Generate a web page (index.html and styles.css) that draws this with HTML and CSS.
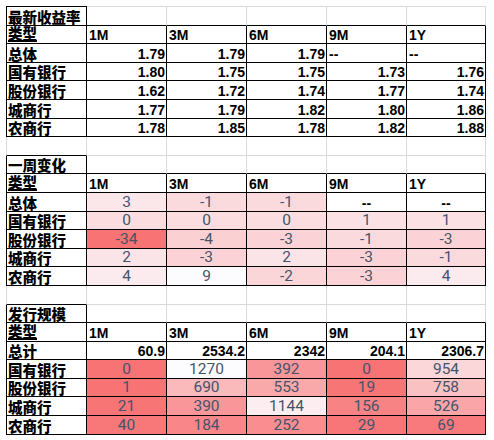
FILE: index.html
```html
<!DOCTYPE html>
<html lang="zh">
<head>
<meta charset="utf-8">
<title>收益率</title>
<link rel="stylesheet" href="styles.css">
</head>
<body>
<div class="sheet">
  <!-- 最新收益率 -->
  <div class="cell fc top title zh">最新收益率</div>
  <div class="cell cap top"></div><div class="cell cap top"></div><div class="cell cap top"></div><div class="cell cap top"></div><div class="cell cap top"></div>
  <div class="cell fc zh"><span class="ul">类型</span></div>
  <div class="cell hd">1M</div><div class="cell hd">3M</div><div class="cell hd">6M</div><div class="cell hd">9M</div><div class="cell hd">1Y</div>
  <div class="cell fc zh">总体</div>
  <div class="cell num">1.79</div><div class="cell num">1.79</div><div class="cell num">1.79</div><div class="cell dash">--</div><div class="cell dash">--</div>
  <div class="cell fc zh">国有银行</div>
  <div class="cell num">1.80</div><div class="cell num">1.75</div><div class="cell num">1.75</div><div class="cell num">1.73</div><div class="cell num">1.76</div>
  <div class="cell fc zh">股份银行</div>
  <div class="cell num">1.62</div><div class="cell num">1.72</div><div class="cell num">1.74</div><div class="cell num">1.77</div><div class="cell num">1.74</div>
  <div class="cell fc zh">城商行</div>
  <div class="cell num">1.77</div><div class="cell num">1.79</div><div class="cell num">1.82</div><div class="cell num">1.80</div><div class="cell num">1.86</div>
  <div class="cell fc zh">农商行</div>
  <div class="cell num">1.78</div><div class="cell num">1.85</div><div class="cell num">1.78</div><div class="cell num">1.82</div><div class="cell num">1.88</div>

  <div class="cell fc gap gap0"></div><div class="cell gap"></div><div class="cell gap"></div><div class="cell gap"></div><div class="cell gap"></div><div class="cell gap"></div>

  <!-- 一周变化 -->
  <div class="cell fc title zh">一周变化</div>
  <div class="cell cap"></div><div class="cell cap"></div><div class="cell cap"></div><div class="cell cap"></div><div class="cell cap"></div>
  <div class="cell fc zh"><span class="ul">类型</span></div>
  <div class="cell hd">1M</div><div class="cell hd">3M</div><div class="cell hd">6M</div><div class="cell hd">9M</div><div class="cell hd">1Y</div>
  <div class="cell fc zh">总体</div>
  <div class="cell val" style="background:rgb(251,231,234)">3</div><div class="cell val" style="background:rgb(251,218,221)">-1</div><div class="cell val" style="background:rgb(251,218,221)">-1</div><div class="cell dc">--</div><div class="cell dc">--</div>
  <div class="cell fc zh">国有银行</div>
  <div class="cell val" style="background:rgb(251,221,224)">0</div><div class="cell val" style="background:rgb(251,221,224)">0</div><div class="cell val" style="background:rgb(251,221,224)">0</div><div class="cell val" style="background:rgb(251,225,228)">1</div><div class="cell val" style="background:rgb(251,225,228)">1</div>
  <div class="cell fc zh">股份银行</div>
  <div class="cell val" style="background:rgb(248,115,116)">-34</div><div class="cell val" style="background:rgb(251,208,210)">-4</div><div class="cell val" style="background:rgb(251,211,214)">-3</div><div class="cell val" style="background:rgb(251,218,221)">-1</div><div class="cell val" style="background:rgb(251,211,214)">-3</div>
  <div class="cell fc zh">城商行</div>
  <div class="cell val" style="background:rgb(251,228,231)">2</div><div class="cell val" style="background:rgb(251,211,214)">-3</div><div class="cell val" style="background:rgb(251,228,231)">2</div><div class="cell val" style="background:rgb(251,211,214)">-3</div><div class="cell val" style="background:rgb(251,218,221)">-1</div>
  <div class="cell fc zh">农商行</div>
  <div class="cell val" style="background:rgb(252,235,238)">4</div><div class="cell val" style="background:rgb(252,252,255)">9</div><div class="cell val" style="background:rgb(251,214,217)">-2</div><div class="cell val" style="background:rgb(251,211,214)">-3</div><div class="cell val" style="background:rgb(252,235,238)">4</div>

  <div class="cell fc gap gap0"></div><div class="cell gap"></div><div class="cell gap"></div><div class="cell gap"></div><div class="cell gap"></div><div class="cell gap"></div>

  <!-- 发行规模 -->
  <div class="cell fc title zh">发行规模</div>
  <div class="cell cap"></div><div class="cell cap"></div><div class="cell cap"></div><div class="cell cap"></div><div class="cell cap"></div>
  <div class="cell fc zh"><span class="ul">类型</span></div>
  <div class="cell hd">1M</div><div class="cell hd">3M</div><div class="cell hd">6M</div><div class="cell hd">9M</div><div class="cell hd">1Y</div>
  <div class="cell fc zh">总计</div>
  <div class="cell num">60.9</div><div class="cell num">2534.2</div><div class="cell num">2342</div><div class="cell num">204.1</div><div class="cell num">2306.7</div>
  <div class="cell fc zh">国有银行</div>
  <div class="cell val" style="background:rgb(248,115,116)">0</div><div class="cell val" style="background:rgb(252,252,255)">1270</div><div class="cell val" style="background:rgb(249,150,153)">392</div><div class="cell val" style="background:rgb(248,115,116)">0</div><div class="cell val" style="background:rgb(251,215,218)">954</div>
  <div class="cell fc zh">股份银行</div>
  <div class="cell val" style="background:rgb(248,115,116)">1</div><div class="cell val" style="background:rgb(250,185,187)">690</div><div class="cell val" style="background:rgb(250,169,171)">553</div><div class="cell val" style="background:rgb(248,117,118)">19</div><div class="cell val" style="background:rgb(250,193,195)">758</div>
  <div class="cell fc zh">城商行</div>
  <div class="cell val" style="background:rgb(248,117,118)">21</div><div class="cell val" style="background:rgb(249,150,153)">390</div><div class="cell val" style="background:rgb(252,237,240)">1144</div><div class="cell val" style="background:rgb(248,131,133)">156</div><div class="cell val" style="background:rgb(250,166,168)">526</div>
  <div class="cell fc zh">农商行</div>
  <div class="cell val" style="background:rgb(248,119,121)">40</div><div class="cell val" style="background:rgb(249,134,136)">184</div><div class="cell val" style="background:rgb(249,141,143)">252</div><div class="cell val" style="background:rgb(248,118,120)">29</div><div class="cell val" style="background:rgb(248,122,124)">69</div>
</div>
</body>
</html>
```

FILE: styles.css
```css
body {
  margin: 0;
  background: #fff;
}

.sheet {
  display: grid;
  grid-template-columns: 81px 80px 80px 80px 80px 79px;
  grid-template-rows: 19.6px repeat(22, 18.6px);
  margin: 6px 0 0 6px;
  width: 480px;
  font-family: "Liberation Sans", Arial, sans-serif;
  color: #000;
}

.cell {
  box-sizing: border-box;
  border-right: 1px solid #000;
  border-bottom: 1px solid #000;
  display: flex;
  align-items: flex-end;
  overflow: hidden;
  white-space: nowrap;
  padding: 0 2px 1px 2px;
  line-height: 14px;
  font-size: 14px;
}

.fc {
  border-left: 1px solid #000;
}

.top {
  border-top: 1px solid #000;
}

.cap {
  border-right-color: #d9d9d9;
}

.cap.top {
  border-top-color: #d9d9d9;
}

.gap {
  border-right-color: #d9d9d9;
  border-bottom-color: #d9d9d9;
}

.gap0 {
  border-left-color: #d9d9d9;
  border-bottom-color: #000;
}

.zh {
  font-family: "Noto Sans CJK SC", sans-serif;
  font-weight: 900;
  font-size: 14.5px;
  line-height: 15px;
  padding-left: 1px;
  overflow: visible;
}

.ul {
  display: inline-block;
  line-height: 14px;
  border-bottom: 2px solid #000;
}

.hd {
  font-weight: 700;
}

.num {
  font-weight: 700;
  justify-content: flex-end;
  padding-right: 1px;
}

.dash {
  font-weight: 700;
}

.dc {
  font-weight: 700;
  justify-content: center;
}

.val {
  justify-content: center;
  font-family: Roboto, "Liberation Sans", sans-serif;
  font-weight: 400;
  font-size: 15.5px;
  line-height: 15px;
  color: #44546a;
}
```
